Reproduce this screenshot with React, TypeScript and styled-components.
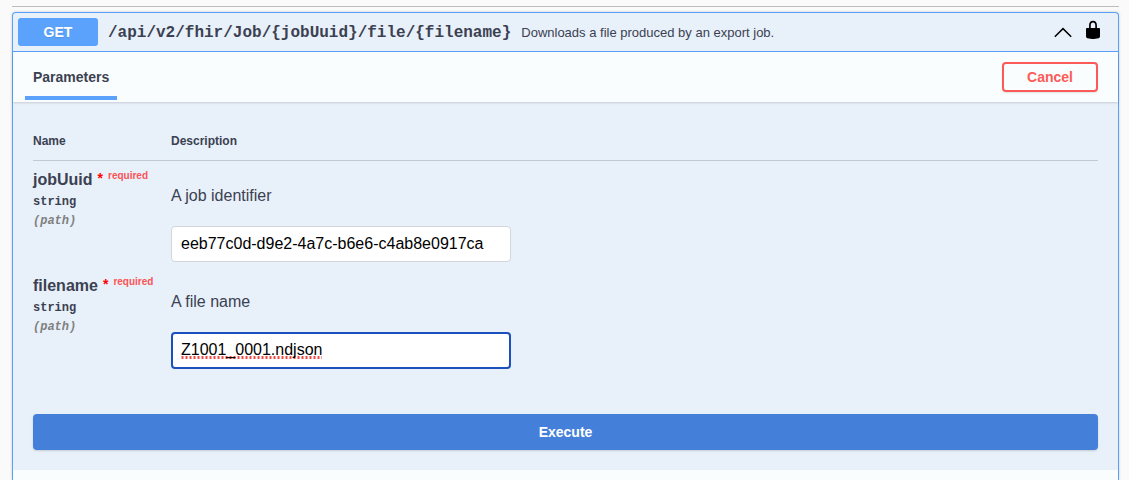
import React, { useState } from "react";
import styled, { createGlobalStyle } from "styled-components";

const sans = `"Liberation Sans", Arial, sans-serif`;
const mono = `"Liberation Mono", "Courier New", monospace`;

const GlobalStyle = createGlobalStyle`
  *, *::before, *::after { box-sizing: border-box; }
  body {
    margin: 0;
    background: #fafafa;
    color: #3b4151;
    font-family: ${sans};
  }
`;

const Page = styled.main`
  padding: 6px 10px 0 12px;
`;

const TagRule = styled.hr`
  height: 1px;
  margin: 0 0 5px;
  border: 0;
  background: #bbbcbd;
`;

const OperationBlock = styled.section`
  border: 1px solid #57a0fb;
  border-bottom: 0;
  border-radius: 4px 4px 0 0;
  background: #e8f0fa;
  box-shadow: 0 0 3px rgba(0, 0, 0, 0.19);
`;

const Summary = styled.header`
  display: flex;
  align-items: center;
  padding: 5px;
  border-bottom: 1px solid #57a0fb;
`;

const Method = styled.span`
  width: 80px;
  border-radius: 3px;
  background: #5aa2fb;
  color: #fff;
  font-size: 14px;
  font-weight: 700;
  line-height: 28px;
  text-align: center;
  text-shadow: 0 1px 0 rgba(0, 0, 0, 0.1);
`;

const Path = styled.span`
  padding: 2px 10px 0;
  font-family: ${mono};
  font-size: 16px;
  font-weight: 700;
  line-height: 20px;
`;

const SummaryText = styled.span`
  flex: 1;
  padding-top: 2px;
  font-size: 13px;
  line-height: 20px;
`;

const IconButton = styled.button<{ $raised?: boolean }>`
  display: flex;
  padding: 0 0 ${({ $raised }) => ($raised ? 4 : 0)}px;
  border: 0;
  background: none;
  color: #000;
`;

const SummaryActions = styled.div`
  display: flex;
  align-items: center;
  gap: 10px;
  height: 28px;
  padding-right: 10px;
`;

const SectionHeader = styled.div`
  display: flex;
  align-items: center;
  justify-content: space-between;
  height: 50px;
  padding: 0 20px 0 12px;
  background: #fafdfe;
  box-shadow: 0 1px 2px rgba(0, 0, 0, 0.15);
`;

const Tab = styled.h4`
  display: flex;
  align-items: center;
  align-self: stretch;
  margin: 0 0 2px;
  padding: 6px 8px 0;
  border-bottom: 4px solid #5aa2fb;
  font-size: 14px;
  line-height: 16px;
`;

const CancelButton = styled.button`
  width: 96px;
  height: 30px;
  padding: 0;
  border: 2px solid #fb5a58;
  border-radius: 4px;
  background: transparent;
  box-shadow: 0 1px 2px rgba(0, 0, 0, 0.1);
  color: #fb5a58;
  font-family: ${sans};
  font-size: 14px;
  font-weight: 700;
`;

const Body = styled.div`
  padding: 21px 20px 20px;
`;

const ParameterTable = styled.table`
  width: 100%;
  border-collapse: separate;
  border-spacing: 0;
`;

const HeadCell = styled.th<{ $width?: number }>`
  width: ${({ $width }) => ($width ? `${$width}px` : "auto")};
  padding: 11px 0;
  border-bottom: 1px solid #c3c9d4;
  font-size: 12px;
  line-height: 15px;
  text-align: left;
`;

const Cell = styled.td`
  height: 106px;
  padding: 10px 0 0;
  vertical-align: top;
`;

const ParameterName = styled.label`
  display: flex;
  font-size: 16px;
  font-weight: 700;
  line-height: 18px;
`;

const Star = styled.span`
  padding: 0 5px;
  color: #f00;
  font-size: 14px;
  line-height: 14px;
`;

const Required = styled.span`
  color: #fb5456;
  font-size: 10px;
  line-height: 10px;
`;

const ParameterType = styled.div`
  padding: 6px 0 5px;
  font-family: ${mono};
  font-size: 12px;
  font-weight: 700;
  line-height: 14px;
`;

const ParameterIn = styled.div`
  color: #808080;
  font-family: ${mono};
  font-size: 12px;
  font-style: italic;
  font-weight: 700;
  line-height: 14px;
`;

const Description = styled.p`
  margin: 0 0 20px;
  padding-top: 15px;
  font-size: 16px;
  line-height: 20px;
`;

const TextInput = styled.input`
  display: block;
  width: 340px;
  max-width: 100%;
  height: 36px;
  padding: 0 9px;
  border: 1px solid #d3d6da;
  border-radius: 4px;
  outline: none;
  background: #fff;
  color: #000;
  font-family: ${sans};
  font-size: 16px;
`;

/* The field being edited: a strong border and a dotted spelling mark. */
const ActiveInput = styled(TextInput)`
  height: 37px;
  padding: 0 8px 1px;
  border: 2px solid #1b50bd;
  background-image: repeating-linear-gradient(
    90deg,
    rgba(244, 72, 66, 0.5) 0 1px,
    #f44842 1px 2px,
    rgba(244, 72, 66, 0.5) 2px 3px,
    transparent 3px 4px
  );
  background-position: 8px 22px;
  background-repeat: no-repeat;
  background-size: 141px 3px;
`;

const ExecuteButton = styled.button`
  display: block;
  width: 100%;
  height: 36px;
  margin-top: 41px;
  padding: 0;
  border: 0;
  border-radius: 4px;
  background: #4480da;
  box-shadow: 0 1px 2px rgba(0, 0, 0, 0.15);
  color: #fff;
  font-family: ${sans};
  font-size: 14px;
  font-weight: 700;
`;

const Responses = styled.div`
  height: 10px;
  background: #fafdfe;
`;

const parameters = [
  { name: "jobUuid", description: "A job identifier", value: "eeb77c0d-d9e2-4a7c-b6e6-c4ab8e0917ca", active: false },
  { name: "filename", description: "A file name", value: "Z1001_0001.ndjson", active: true },
];

export default function App() {
  const [values, setValues] = useState(parameters.map((p) => p.value));

  return (
    <>
      <GlobalStyle />
      <Page>
        <TagRule />
        <OperationBlock>
          <Summary>
            <Method>GET</Method>
            <Path>{"/api/v2/fhir/Job/{jobUuid}/file/{filename}"}</Path>
            <SummaryText>Downloads a file produced by an export job.</SummaryText>
            <SummaryActions>
              <IconButton aria-label="Collapse operation">
                <svg width="20" height="20" viewBox="0 0 20 20" fill="none" stroke="currentColor" strokeWidth="1.5">
                  <path d="M1.8 14.8 10 6.6l8.2 8.2" />
                </svg>
              </IconButton>
              <IconButton $raised aria-label="Authorization button locked">
                <svg width="20" height="20" viewBox="0 0 20 20">
                  <path d="M6.9 9V5.6C6.9 3.3 8 1.6 10 1.6s3.1 1.7 3.1 4V9" fill="none" stroke="currentColor" strokeWidth="1.7" />
                  <path d="M4.2 8h11.6c.7 0 1.2.5 1.2 1.2v7c0 1-.6 1.7-1.5 2l-1.4.4c-.9.2-2.3.3-3.1.3H9c-.8 0-2.2-.1-3.1-.3l-1.4-.4c-.9-.3-1.5-1-1.5-2v-7C3 8.500 3.500 8 4.200 8z" fill="currentColor" />
                </svg>
              </IconButton>
            </SummaryActions>
          </Summary>
          <SectionHeader>
            <Tab>Parameters</Tab>
            <CancelButton>Cancel</CancelButton>
          </SectionHeader>
          <Body>
            <ParameterTable>
              <thead>
                <tr>
                  <HeadCell $width={138}>Name</HeadCell>
                  <HeadCell>Description</HeadCell>
                </tr>
              </thead>
              <tbody>
                {parameters.map((p, i) => {
                  const Input = p.active ? ActiveInput : TextInput;
                  return (
                    <tr key={p.name}>
                      <Cell>
                        <ParameterName htmlFor={p.name}>
                          {p.name}
                          <Star>*</Star>
                          <Required>required</Required>
                        </ParameterName>
                        <ParameterType>string</ParameterType>
                        <ParameterIn>(path)</ParameterIn>
                      </Cell>
                      <Cell>
                        <Description>{p.description}</Description>
                        <Input
                          id={p.name}
                          type="text"
                          spellCheck={false}
                          value={values[i]}
                          onChange={(e) => setValues(values.map((v, j) => (j === i ? e.target.value : v)))}
                        />
                      </Cell>
                    </tr>
                  );
                })}
              </tbody>
            </ParameterTable>
            <ExecuteButton>Execute</ExecuteButton>
          </Body>
          <Responses />
        </OperationBlock>
      </Page>
    </>
  );
}
